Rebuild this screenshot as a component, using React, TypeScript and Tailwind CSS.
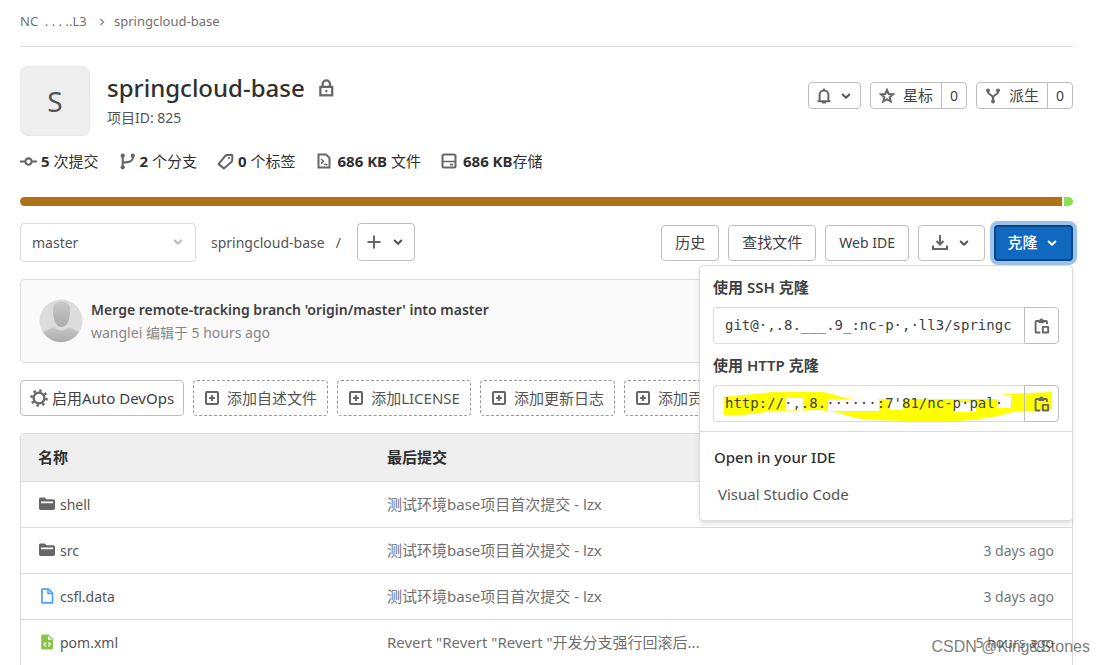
import { useState } from "react";
import type { ReactNode } from "react";

type FileRow = {
  name: string;
  kind: "folder" | "file" | "xml";
  commit: string;
  time: string;
};

const files: FileRow[] = [
  { name: "shell", kind: "folder", commit: "测试环境base项目首次提交 - lzx", time: "3 days ago" },
  { name: "src", kind: "folder", commit: "测试环境base项目首次提交 - lzx", time: "3 days ago" },
  { name: "csfl.data", kind: "file", commit: "测试环境base项目首次提交 - lzx", time: "3 days ago" },
  {
    name: "pom.xml",
    kind: "xml",
    commit: 'Revert "Revert "Revert "开发分支强行回滚后...',
    time: "5 hours ago",
  },
];

const suggestions = ["添加自述文件", "添加LICENSE", "添加更新日志", "添加贡献信息"];

const outline =
  "rounded border border-[#bfbfbf] bg-white text-[#404040] hover:bg-gray-50";

function Icon({ children, className = "size-4 text-[#666]" }: { children: ReactNode; className?: string }) {
  return (
    <svg
      viewBox="0 0 16 16"
      fill="none"
      stroke="currentColor"
      strokeWidth="2"
      aria-hidden="true"
      className={`shrink-0 ${className}`}
    >
      {children}
    </svg>
  );
}

function Chevron({ className = "size-4 text-[#555]" }: { className?: string }) {
  return (
    <Icon className={className}>
      <path d="M4.7 6.5 8 9.8l3.3-3.3" strokeLinecap="round" strokeLinejoin="round" />
    </Icon>
  );
}

function PlusSquare() {
  return (
    <Icon>
      <rect x="2" y="2" width="12" height="12" rx="1" />
      <path d="M8 5v6M5 8h6" />
    </Icon>
  );
}

function CopyIcon() {
  return (
    <Icon className="size-[18px] text-[#666]">
      <path d="M6.500 13.800H3.200a.9.9 0 0 1-.9-.9V4.400c0-.5.4-.9.900-.9h8.300c.5 0 .9.4.9.9v1.800" strokeWidth="1.700" />
      <path d="M4.800 5.300V3c0-.4.300-.6.600-.6h.500a1.600 1.600 0 0 1 3 0h.5c.3 0 .6.200.6.600v2.300z" fill="currentColor" stroke="none" />
      <rect x="8.700" y="8.800" width="4.800" height="5" rx="0.300" strokeWidth="1.700" />
    </Icon>
  );
}

function FileIcon({ kind }: { kind: FileRow["kind"] }) {
  if (kind === "folder") {
    return (
      <Icon className="size-4 text-[#666]">
        <path
          d="M0 3.200C0 2.200.8 1.500 1.700 1.500h4L7.500 3.200h6.800c.9 0 1.700.8 1.700 1.700v7.400c0 .9-.8 1.700-1.700 1.700H1.700C.8 14 0 13.200 0 12.300zM2 5.500v1.800h12V5.500z"
          fill="currentColor"
          fillRule="evenodd"
          stroke="none"
        />
      </Icon>
    );
  }
  if (kind === "file") {
    return (
      <Icon className="size-4 text-[#42a5f5]">
        <path d="M3 1.200h6.500L13.500 5v9.800H3z" strokeWidth="1.700" strokeLinejoin="round" />
        <path d="M9 1.500v4h4" strokeWidth="1.500" />
      </Icon>
    );
  }
  return (
    <Icon className="size-4 text-[#8bc34a]">
      <path
        d="M3.500.500H9.500L14 5v9.200c0 .8-.6 1.300-1.400 1.300H3.500c-.8 0-1.300-.5-1.300-1.300V1.800C2.200 1 2.700.500 3.500.500zM9 1.700v4h4z"
        fill="currentColor"
        fillRule="evenodd"
        stroke="none"
      />
      <path d="M7 8.200 5 10.200l2 2M9.300 8.200l2 2-2 2" stroke="#fff" strokeWidth="1.300" />
    </Icon>
  );
}

function CloneField({ id, label, value, children }: { id: string; label: string; value: string; children?: ReactNode }) {
  return (
    <div>
      <label htmlFor={id} className="block font-semibold leading-5 text-[#404040]">
        {label}
      </label>
      <div className="relative mt-2.5 flex h-[37px]">
        {children}
        <input
          id={id}
          readOnly
          value={value}
          className="relative w-0 grow rounded-l border border-r-0 border-[#dbdbdb] bg-transparent pl-[11px] font-['DejaVu_Sans_Mono',monospace] text-[14px] text-[#404040] outline-none"
        />
        <button
          aria-label="复制"
          className="relative flex w-[35px] items-center justify-center rounded-r border border-[#bfbfbf]"
        >
          <CopyIcon />
        </button>
      </div>
    </div>
  );
}

function CloneMenu() {
  return (
    <div className="absolute right-0 top-full z-10 mt-1 w-[374px] rounded border border-[#dbdbdb] bg-white pt-[11px] shadow-md">
      <div className="space-y-[11px] px-[13px]">
        <CloneField id="ssh" label="使用 SSH 克隆" value="git@·,.8.___.9_:nc-p·,·ll3/springc" />
        <CloneField id="http" label="使用 HTTP 克隆" value="http://·,.8.······:7'81/nc-p·pal·">
          {/* highlighter stroke with the masked parts of the address */}
          <svg viewBox="0 0 346 37" aria-hidden="true" className="absolute inset-0 size-full">
            <path
              d="M11 12 30 10 60 7H110L119 9 129 12 141 14H270L291 14V9L313 8 339 7V25L300 27 285 31 260 35 224 37 160 35 142 33 126 28 107 25 60 26 30 30H11z"
              fill="#ff0"
            />
            <path
              d="M73 13h17v12H73zM115 14h51v12h-51zM177 14h13v11h-13zM242 17h21v10h-21zM284 10h14v13h-14z"
              fill="#fff"
            />
          </svg>
        </CloneField>
      </div>
      <div className="mt-[9px] border-t border-[#dbdbdb] px-[14px] pt-[15px] pb-4">
        <h2 className="font-medium leading-5 text-[#303030]">Open in your IDE</h2>
        <a href="#vscode" className="mt-[17px] block px-1 leading-5 text-[#555]">
          Visual Studio Code
        </a>
      </div>
    </div>
  );
}

export default function App() {
  const [open, setOpen] = useState(true);

  return (
    <main className="relative h-screen overflow-hidden bg-white pl-5 pr-[33px] font-['Noto_Sans','Noto_Sans_CJK_SC',sans-serif] text-[15px] text-[#303030]">
      <nav className="flex h-[47px] items-center border-b border-[#dbdbdb] pb-0.5 text-[13px] text-[#707070]">
        <a href="#group" className="w-[72px] whitespace-pre">NC  . . . ..L3</a>
        <Icon className="ml-1 mr-1.5 size-3 text-[#888]">
          <path d="m6 4 4 4-4 4" strokeWidth="1.800" />
        </Icon>
        <a href="#project">springcloud-base</a>
      </nav>

      <header className="mt-[19px] flex h-[70px] items-start">
        <div className="flex size-[70px] items-center justify-center rounded-lg border border-[#e8e8e8] bg-[#eee] text-[28px] text-[#555]">
          S
        </div>
        <div className="ml-[17px] grow">
          <h1 className="flex items-center gap-3 pt-1.5 text-[24px] font-medium leading-8">
            springcloud-base
            <Icon className="size-[18px] text-[#666]">
              <rect x="3" y="7" width="10.500" height="7.500" />
              <path d="M5 7V4.500a3.250 3.250 0 0 1 6.500 0V7" />
              <path d="M7.400 10.800h1.800" />
            </Icon>
          </h1>
          <p className="mt-1 text-[14px] leading-5 text-[#555]">项目ID: 825</p>
        </div>
        <div className="flex gap-[9px] pt-4">
          <button aria-label="通知" className={`flex h-[27px] w-[53px] items-center justify-center gap-1.5 ${outline}`}>
            <Icon>
              <path d="M1.500 13.200h13M3.600 13V6.800a4.400 4.400 0 0 1 8.800 0V13" />
              <path d="M6 14.500h4M8 .5v2" />
            </Icon>
            <Chevron />
          </button>
          <div className={`flex h-[27px] ${outline}`}>
            <button className="flex w-[70px] items-center justify-center gap-2">
              <Icon>
                <path d="m8 2 1.700 4 4.300.400-3.300 2.800 1 4.300L8 11.200l-3.700 2.300 1-4.300L2 6.400 6.300 6z" />
              </Icon>
              星标
            </button>
            <a href="#stars" className="flex w-[25px] items-center justify-center border-l border-[#bfbfbf] text-[14px]">
              0
            </a>
          </div>
          <div className={`flex h-[27px] ${outline}`}>
            <button className="flex w-[70px] items-center justify-center gap-2">
              <Icon>
                <path d="M3 2v2c0 3 5 2.500 5 6v4M13 2v2c0 3-5 2.500-5 6" />
                <g fill="currentColor" stroke="none">
                  <circle cx="3" cy="2.500" r="2" />
                  <circle cx="13" cy="2.500" r="2" />
                  <circle cx="8" cy="13.500" r="2" />
                </g>
              </Icon>
              派生
            </button>
            <a href="#forks" className="flex w-[25px] items-center justify-center border-l border-[#bfbfbf] text-[14px]">
              0
            </a>
          </div>
        </div>
      </header>

      <ul className="mt-[15px] flex h-5 items-center gap-5">
        <li className="flex items-center gap-1">
          <Icon className="size-[17px] text-[#666]">
            <circle cx="8" cy="8" r="3" />
            <path d="M0 8h5M11 8h5" />
          </Icon>
          <span><strong>5</strong> 次提交</span>
        </li>
        <li className="flex items-center gap-1">
          <Icon className="size-[17px] text-[#666]">
            <path d="M3.500 2v12M13 3v1.500c0 3-2.500 4-9.500 4.500" />
            <g fill="currentColor" stroke="none">
              <circle cx="3.500" cy="2.500" r="2" />
              <circle cx="13" cy="2.500" r="2" />
              <circle cx="3.500" cy="13.500" r="2" />
            </g>
          </Icon>
          <span><strong>2</strong> 个分支</span>
        </li>
        <li className="flex items-center gap-1">
          <Icon className="size-[17px] text-[#666]">
            <path d="m1.500 10.500 6-7.500c.5-.6 1-.9 1.800-1l4-.3c.7 0 1.200.5 1.200 1.200l-.2 4c0 .6-.3 1-.8 1.500l-7 6.100z" strokeWidth="1.900" strokeLinejoin="round" />
            <circle cx="11.300" cy="4.800" r="1" fill="currentColor" stroke="none" />
          </Icon>
          <span><strong>0</strong> 个标签</span>
        </li>
        <li className="flex items-center gap-1.5">
          <Icon>
            <path d="M2.500 1.500H10L13.500 5v9.500h-11z" />
            <path d="m5 6 2.500 2.300L5 10.600M8 11.500h3.500" strokeWidth="1.500" />
          </Icon>
          <span><strong>686 KB</strong> 文件</span>
        </li>
        <li className="flex items-center gap-1.5">
          <Icon>
            <rect x="1.500" y="1.500" width="13" height="13" rx="1.500" />
            <path d="M2 8.500h12M9 11.700h3" strokeWidth="1.700" />
          </Icon>
          <span><strong>686 KB</strong>存储</span>
        </li>
      </ul>

      <div className="mt-[26px] flex h-[9px] gap-0.5 overflow-hidden rounded-full">
        <span className="grow bg-[#b07219]" />
        <span className="w-[9px] bg-[#89e051]" />
      </div>

      <section className="mt-[17px] flex h-[39px] items-start">
        <div className="relative h-[39px] w-44">
          <select
            aria-label="分支"
            className="size-full appearance-none rounded border border-[#dbdbdb] bg-white px-[11px] text-[14px] text-[#555]"
          >
            <option>master</option>
          </select>
          <Chevron className="pointer-events-none absolute right-2.5 top-[11px] size-4 text-[#bbb]" />
        </div>
        <div className="ml-[15px] flex h-[38px] items-center gap-[11px] text-[14px] text-[#555]">
          <a href="#root">springcloud-base</a>
          <span>/</span>
        </div>
        <button aria-label="添加" className={`ml-4 flex h-[38px] w-[58px] items-center justify-center gap-2 ${outline}`}>
          <Icon>
            <path d="M8 1.500v13M1.500 8h13" />
          </Icon>
          <Chevron />
        </button>
        <div className="relative ml-auto flex h-[38px] items-center gap-[9px] pt-px">
          <button className={`h-9 px-[13px] ${outline}`}>历史</button>
          <button className={`h-9 px-[13px] ${outline}`}>查找文件</button>
          <button className={`h-9 px-[13px] text-[14px] ${outline}`}>Web IDE</button>
          <button aria-label="下载" className={`flex h-9 w-[67px] items-center justify-center gap-2 ${outline}`}>
            <Icon>
              <path d="M8 0v9M4.500 6 8 9.500 11.500 6M1 10.500V14h14v-3.500" />
            </Icon>
            <Chevron />
          </button>
          <button
            onClick={() => setOpen(!open)}
            className="flex h-9 w-[79px] items-center justify-center gap-1.5 rounded border-2 border-[#064787] bg-[#1068bf] font-medium text-white ring-4 ring-[#9dc2ea]"
          >
            克隆
            <Chevron className="size-4 text-white" />
          </button>
          {open && <CloneMenu />}
        </div>
      </section>

      <section className="mt-[17px] flex h-[84px] items-center rounded border border-[#dbdbdb] bg-[#fafafa] px-[18px]">
        <svg viewBox="0 0 44 44" aria-hidden="true" className="size-11">
          <defs>
            <linearGradient id="person" x1="0" y1="0" x2="0" y2="1">
              <stop offset="0" stopColor="#c8c8c8" />
              <stop offset="1" stopColor="#ababab" />
            </linearGradient>
            <clipPath id="disc">
              <circle cx="22" cy="22" r="21" />
            </clipPath>
          </defs>
          <circle cx="22" cy="22" r="21.500" fill="#dcdcdc" />
          <g clipPath="url(#disc)" fill="url(#person)">
            <path d="M14 11c0-5 3-8.500 8.500-8.500S31 6 31 11c0 8-2 17-8.500 17S14 19 14 11z" />
            <path d="M3 43V35c3-4 8-5 12-7 4 4.500 11 4.500 15 0 4 2 8 3 11 7v8z" />
          </g>
        </svg>
        <div className="ml-2 leading-[23px]">
          <a href="#commit" className="block text-[14px] font-semibold text-[#404040]">
            Merge remote-tracking branch 'origin/master' into master
          </a>
          <p className="text-[14px] text-[#868686]">wanglei 编辑于 5 hours ago</p>
        </div>
      </section>

      <div className="mt-[17px] flex gap-[9px] whitespace-nowrap">
        <button className={`flex h-9 items-center gap-1 px-[9px] ${outline}`}>
          <Icon className="size-[18px] text-[#666]">
            <circle cx="8" cy="8" r="4.800" />
            <circle cx="8" cy="8" r="6.700" strokeDasharray="2.200 3.060" strokeWidth="2.200" />
          </Icon>
          启用Auto DevOps
        </button>
        {suggestions.map((text) => (
          <button
            key={text}
            className="flex h-9 items-center gap-[7px] rounded border border-dashed border-[#999] px-2.5 text-[#555]"
          >
            <PlusSquare />
            {text}
          </button>
        ))}
      </div>

      <div className="mt-[17px] rounded-t border border-[#dbdbdb]">
        <table className="w-full table-fixed text-left">
          <thead className="bg-[#efefef]">
            <tr className="h-[47px]">
              <th className="w-[349px] pl-[17px] font-bold">名称</th>
              <th className="pl-[17px] font-bold">最后提交</th>
              <th className="w-[180px] pr-[18px] text-right font-bold">最后更新</th>
            </tr>
          </thead>
          <tbody>
            {files.map((file) => (
              <tr key={file.name} className="h-[46px] border-t border-[#dbdbdb]">
                <td className="pl-[18px]">
                  <a href={`#${file.name}`} className="flex items-center gap-[5px] text-[14px] text-[#555]">
                    <FileIcon kind={file.kind} />
                    {file.name}
                  </a>
                </td>
                <td className="truncate pl-[17px] text-[#707070]">{file.commit}</td>
                <td className="pr-[18px] text-right text-[14px] text-[#777]">{file.time}</td>
              </tr>
            ))}
          </tbody>
        </table>
      </div>

      <span className="pointer-events-none absolute bottom-1.5 right-4 font-['Liberation_Sans',sans-serif] text-[16px] text-[#444]/70">
        CSDN @King&amp;Stones
      </span>
    </main>
  );
}
